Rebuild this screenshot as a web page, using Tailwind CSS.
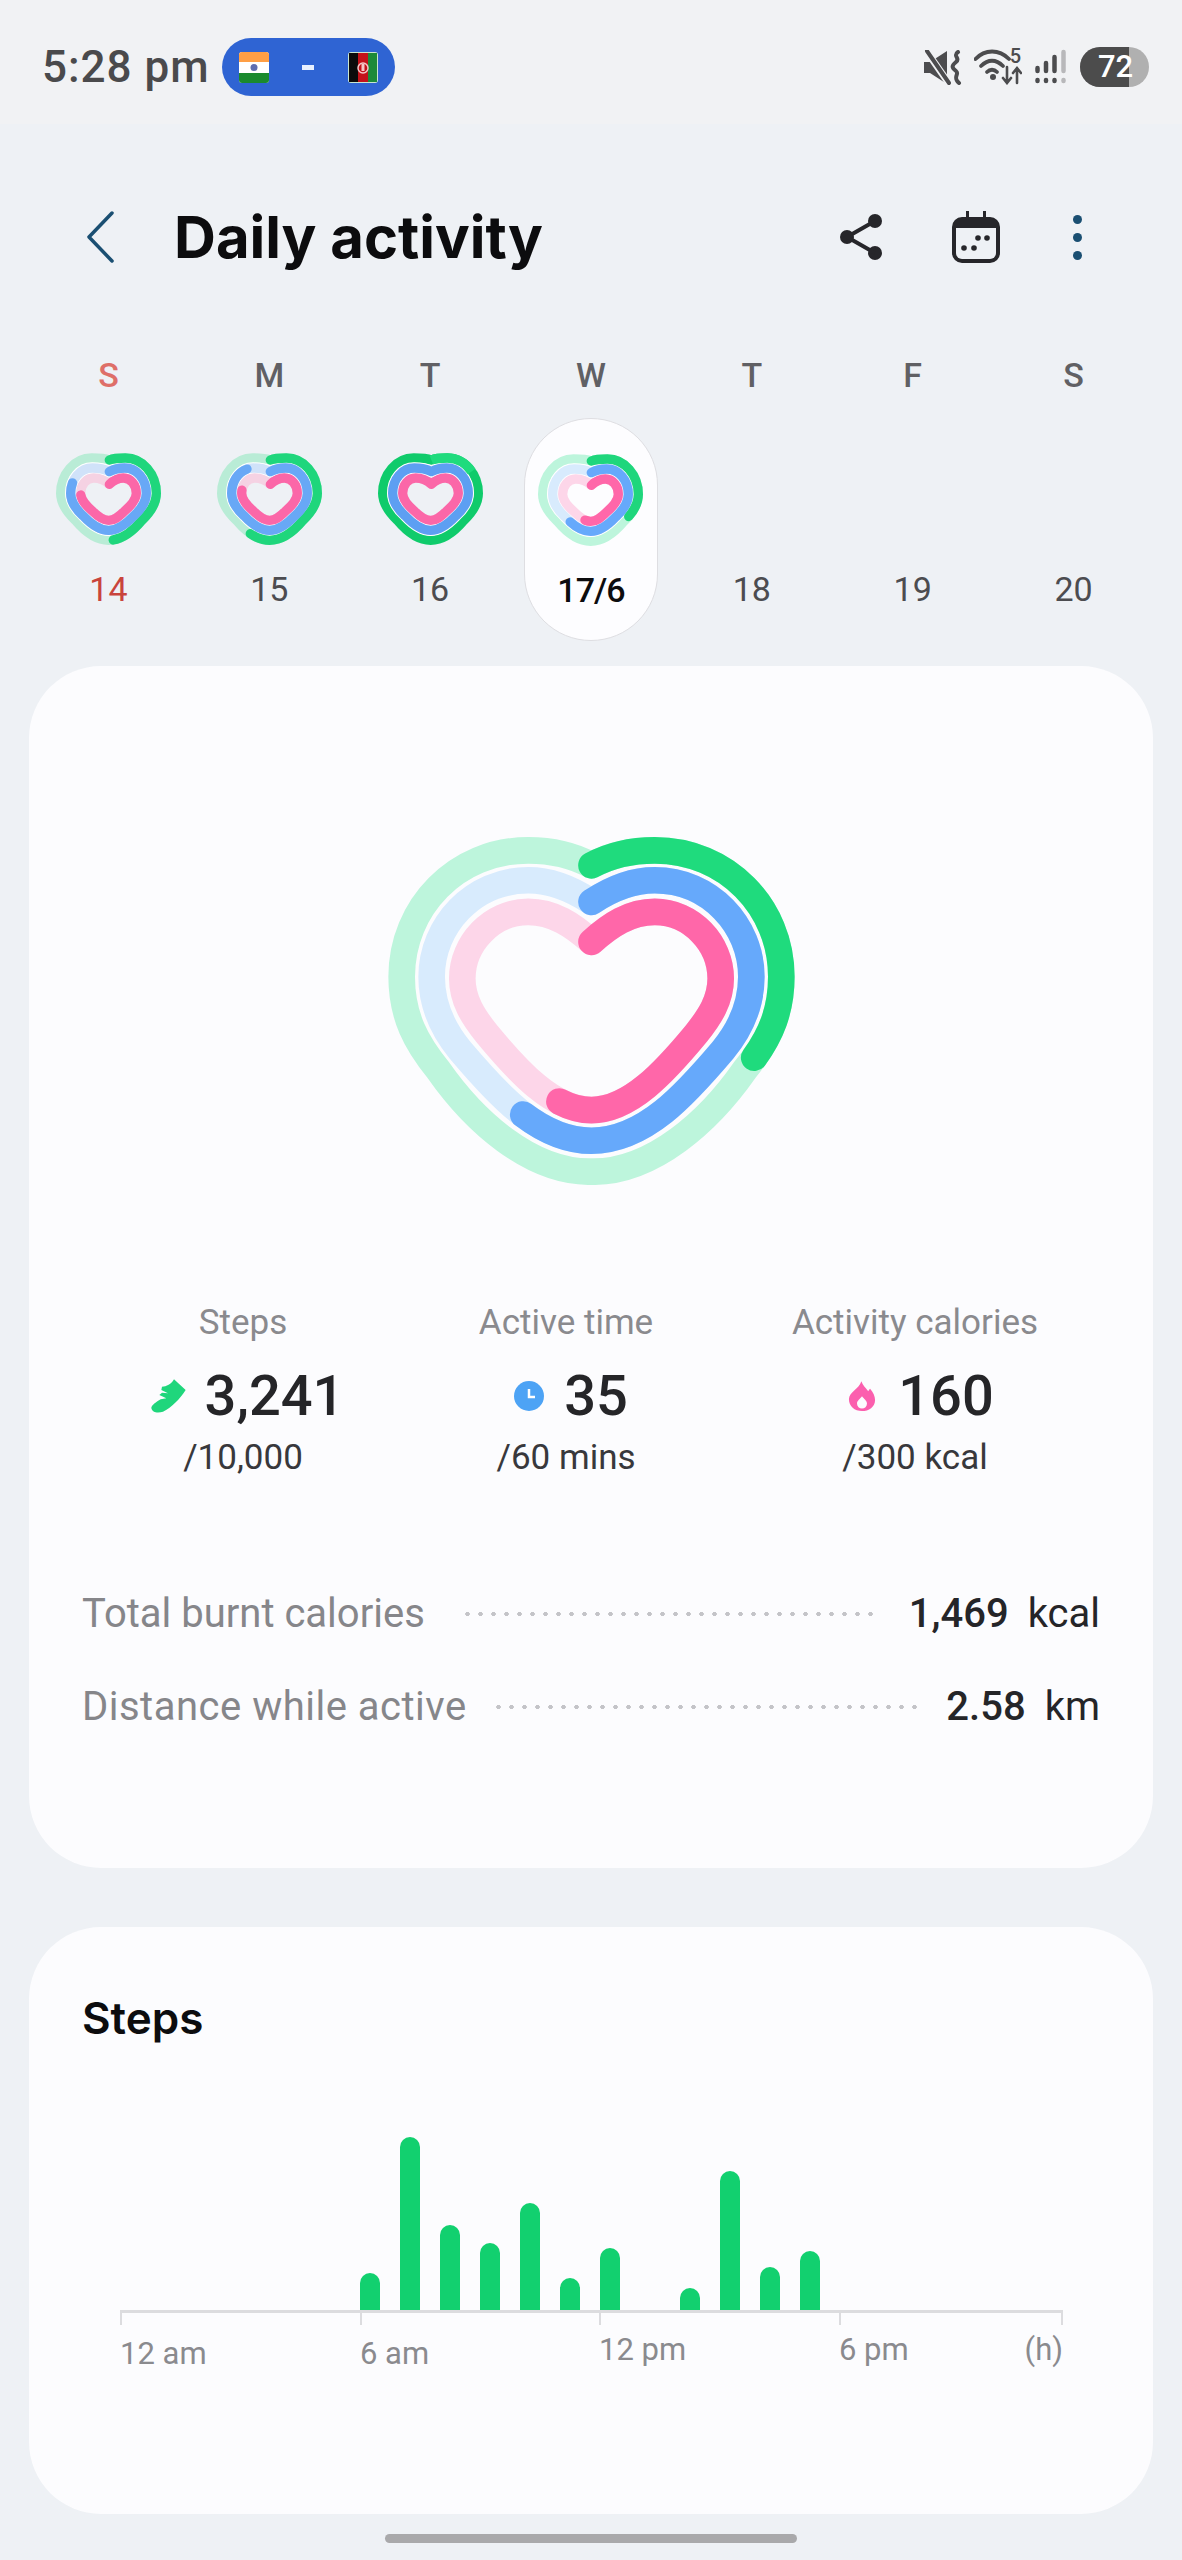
<!doctype html>
<html lang="en">
<head>
<meta charset="utf-8">
<title>Daily activity</title>
<script src="https://cdn.jsdelivr.net/npm/@tailwindcss/browser@4"></script>
</head>
<body class="bg-[#eef1f5] font-['Roboto',sans-serif] text-[#252528]">

<!-- shared heart rings, drawn clockwise from the notch -->
<svg class="hidden" width="0" height="0">
  <defs>
    <path id="ring-green" pathLength="100" d="M755 195 C810 165 880 150 945 150 C1160 150 1325 320 1325 530 C1325 650 1280 730 1215 810 C1110 960 940 1118 755 1115 C570 1118 400 960 295 810 C230 730 185 650 185 530 C185 320 350 150 565 150 C630 150 700 165 755 195"/>
    <path id="ring-blue" pathLength="100" d="M755 305 C815 265 880 240 945 240 C1110 240 1235 375 1235 530 C1235 625 1195 695 1150 750 C1040 880 915 1022 755 1022 C595 1022 470 880 360 750 C315 695 275 625 275 530 C275 375 400 240 565 240 C630 240 695 265 755 305"/>
    <path id="ring-pink" pathLength="100" d="M755 425 C810 375 870 335 945 335 C1055 335 1143 430 1143 535 C1143 600 1110 650 1070 700 C975 815 870 930 755 930 C640 930 535 815 440 700 C400 650 367 600 367 535 C367 430 455 335 565 335 C640 335 700 375 755 425"/>
    <!-- the week strip uses a chunkier version -->
    <path id="mini-green" pathLength="100" d="M190 45 C205 39 222 39 238 39 C290 39 331 88 331 145 C331 178 312 203 288 226 C258 262 226 286 188 286 C150 286 118 262 88 226 C64 203 44 178 44 145 C44 88 85 39 137 39 C155 39 174 39 190 45"/>
    <path id="mini-blue" pathLength="100" d="M190 80 C205 72 220 69 236 69 C273 69 301 103 301 145 C301 172 285 193 264 212 C238 240 215 256 188 256 C160 256 137 240 111 212 C90 193 74 172 74 145 C74 103 102 69 139 69 C155 69 175 72 190 80"/>
    <path id="mini-pink" pathLength="100" d="M190 118 C203 106 218 99 232 99 C254 99 271 120 271 145 C271 163 256 181 236 198 C218 216 205 226 188 226 C171 226 157 216 139 198 C119 181 104 163 104 145 C104 120 121 99 143 99 C158 99 177 106 190 118"/>
  </defs>
</svg>

<!-- status bar -->
<div class="h-[124px] bg-[#f1f2f4] pt-[10px] pl-[42px] pr-[33px] flex items-center">
  <span class="text-[44px] leading-none text-[#4a4a4c] font-medium tracking-[1px]">5:28 pm</span>
  <div class="ml-[12px] w-[173px] h-[58px] rounded-full bg-[#2f64d3] flex items-center pl-[17px]">
    <svg width="30" height="31" viewBox="0 0 30 31">
      <rect width="30" height="31" rx="3" fill="#fff"/>
      <path d="M0 10V3a3 3 0 0 1 3-3h24a3 3 0 0 1 3 3v7z" fill="#ff9f45"/>
      <path d="M0 21v7a3 3 0 0 0 3 3h24a3 3 0 0 0 3-3v-7z" fill="#1a8a2e"/>
      <circle cx="15" cy="15.500" r="3.500" fill="#5e6db0"/>
    </svg>
    <span class="ml-[33px] w-[12px] h-[5px] bg-[#e8f0ff]"></span>
    <svg class="ml-[34px]" width="30" height="31" viewBox="0 0 30 31">
      <rect width="30" height="31" rx="3" fill="#c9e6d0"/>
      <rect x="1" y="1" width="9" height="29" fill="#0b0b0b"/>
      <rect x="10" y="1" width="10" height="29" fill="#c4121a"/>
      <rect x="20" y="1" width="9" height="29" fill="#1c8a3a"/>
      <circle cx="15" cy="16" r="5" fill="none" stroke="#f3c9c9" stroke-width="1.500"/>
      <rect x="13.500" y="12" width="3" height="7" fill="#f3c9c9"/>
    </svg>
  </div>
  <div class="ml-auto flex items-center">
    <!-- mute + vibrate -->
    <svg width="38" height="35" viewBox="0 0 38 35" fill="none">
      <path d="M0 12h6L23 1v33L6 23H0z" fill="#4c4c4e"/>
      <path d="M1 -1L26 35" stroke="#f1f2f4" stroke-width="7"/>
      <path d="M3 1l22 32" stroke="#4c4c4e" stroke-width="4" stroke-linecap="round"/>
      <path d="M34 2c-6 4 3 6-2 10s-4 6 0 9-4 6 3 12" stroke="#4c4c4e" stroke-width="4" stroke-linecap="round"/>
    </svg>
    <!-- wifi -->
    <div class="ml-[12px] relative w-[48px] h-[36px]">
      <svg class="absolute left-0 top-0" width="48" height="36" viewBox="0 0 48 36" fill="none" stroke="#4c4c4e" stroke-linecap="round">
        <path d="M1.500 10C11 0 25 0 35 10" stroke-width="3.800"/>
        <path d="M7 17c7-7 15-7 22 0" stroke-width="3.800"/>
        <path d="M13 23c3-3 7-3 10 0" stroke-width="3.800"/>
        <circle cx="19" cy="28" r="3" fill="#4c4c4e" stroke="none"/>
        <path d="M33 18v15M29 29l4 5 4-5M43 34V19M39 24l4-5 4 5" stroke-width="2.600"/>
      </svg>
      <span class="absolute right-[1px] top-[-3px] text-[20px] leading-[20px] font-medium text-[#4c4c4e]">5</span>
    </div>
    <!-- signal -->
    <svg class="ml-[12px]" width="32" height="36" viewBox="0 0 32 36" fill="none" stroke-linecap="round" stroke-width="4.500" stroke="#4c4c4e">
      <path d="M3.500 19v3M3.500 31v1M12 14v8M12 31v1M20.500 8v14M20.500 31v1"/>
      <path d="M29.500 3v19M29.500 31v1" stroke="#b8b8ba"/>
    </svg>
    <!-- battery -->
    <div class="ml-[14px] relative w-[69px] h-[40px] rounded-full overflow-hidden bg-[#b0b0b0]">
      <div class="h-full w-[49px] bg-[#4c4c4c]"></div>
      <span class="absolute left-[18px] top-0 leading-[40px] text-[31px] font-medium text-white">72</span>
    </div>
  </div>
</div>

<!-- header -->
<div class="mt-[87px] h-[52px] pl-[87px] pr-[100px] flex items-center">
  <svg width="27" height="52" viewBox="0 0 27 52" fill="none">
    <path d="M25 2L2 26l23 24" stroke="#1a4f72" stroke-width="3.500" stroke-linecap="round" stroke-linejoin="round"/>
  </svg>
  <h1 class="ml-[60px] font-['Inter',sans-serif] text-[58px] leading-none font-bold text-[#0c0c0e]">Daily activity</h1>
  <div class="ml-auto flex items-center">
    <svg width="42" height="48" viewBox="0 0 42 48" fill="#26262a">
      <circle cx="35" cy="8" r="7"/>
      <circle cx="7" cy="24" r="7"/>
      <circle cx="35" cy="40" r="7"/>
      <path d="M35 8L7 24l28 16" fill="none" stroke="#26262a" stroke-width="4"/>
    </svg>
    <svg class="ml-[70px]" width="48" height="52" viewBox="0 0 48 52">
      <path d="M14 0h3v6h14V0h3v6h4a10 10 0 0 1 10 10v26a10 10 0 0 1-10 10H10A10 10 0 0 1 0 42V16A10 10 0 0 1 10 6h4z" fill="#26262a"/>
      <path d="M4 17h40v25a6 6 0 0 1-6 6H10a6 6 0 0 1-6-6z" fill="#eef1f5"/>
      <circle cx="12" cy="37" r="2.800" fill="#26262a"/>
      <circle cx="22" cy="37" r="2.800" fill="#26262a"/>
      <circle cx="26" cy="27" r="2.800" fill="#26262a"/>
      <circle cx="35" cy="27" r="2.800" fill="#26262a"/>
    </svg>
    <div class="ml-[73px] flex flex-col gap-[9px]">
      <span class="block w-[9px] h-[9px] rounded-full bg-[#1a4f72]"></span>
      <span class="block w-[9px] h-[9px] rounded-full bg-[#1a4f72]"></span>
      <span class="block w-[9px] h-[9px] rounded-full bg-[#1a4f72]"></span>
    </div>
  </div>
</div>

<!-- week strip -->
<div class="mt-[92px] px-[28px] grid grid-cols-7 text-center text-[34px] leading-[40px] text-[#606064] font-medium">
  <span class="text-[#de6f68]">S</span><span>M</span><span>T</span><span>W</span><span>T</span><span>F</span><span>S</span>
</div>
<div class="mt-[23px] px-[28px] grid grid-cols-7 text-center text-[34px] leading-[40px] text-[#4c4c50]">
  <div class="h-[223px] pt-[27px] flex flex-col items-center">
    <svg width="125" height="110" viewBox="0 0 375 330" fill="none" stroke-width="28" stroke-linecap="round">
      <use href="#mini-green" stroke="#b9ecd6"/><use href="#mini-blue" stroke="#fff" stroke-width="34"/><use href="#mini-blue" stroke="#d0e2f9"/><use href="#mini-pink" stroke="#f5d2e3"/>
      <use href="#mini-green" stroke="#1fd67c" stroke-dasharray="48 100"/><use href="#mini-blue" stroke="#68a8f6" stroke-dasharray="80 100"/><use href="#mini-pink" stroke="#fb67a8" stroke-dasharray="74 100"/>
    </svg>
    <span class="mt-[14px] text-[#c9443c]">14</span>
  </div>
  <div class="h-[223px] pt-[27px] flex flex-col items-center">
    <svg width="125" height="110" viewBox="0 0 375 330" fill="none" stroke-width="28" stroke-linecap="round">
      <use href="#mini-green" stroke="#b9ecd6"/><use href="#mini-blue" stroke="#fff" stroke-width="34"/><use href="#mini-blue" stroke="#d0e2f9"/><use href="#mini-pink" stroke="#f5d2e3"/>
      <use href="#mini-green" stroke="#1fd67c" stroke-dasharray="57 100"/><use href="#mini-blue" stroke="#68a8f6" stroke-dasharray="89 100"/><use href="#mini-pink" stroke="#fb67a8" stroke-dasharray="77 100"/>
    </svg>
    <span class="mt-[14px]">15</span>
  </div>
  <div class="h-[223px] pt-[27px] flex flex-col items-center">
    <svg width="125" height="110" viewBox="0 0 375 330" fill="none" stroke-width="28" stroke-linecap="round">
      <use href="#mini-green" stroke="#0fcb6b"/><use href="#mini-blue" stroke="#fff" stroke-width="34"/><use href="#mini-blue" stroke="#5d9ff2"/><use href="#mini-pink" stroke="#fb67a8"/>
      <use href="#mini-green" stroke="#1fdb7d" stroke-dasharray="16 100" stroke-linecap="butt"/>
    </svg>
    <span class="mt-[14px]">16</span>
  </div>
  <div class="h-[223px] pt-[27px] flex flex-col items-center justify-self-center w-[134px] rounded-full bg-[#fdfdff] border border-[#dedee2]">
    <svg class="shrink-0" width="125" height="110" viewBox="0 0 375 330" fill="none" stroke-width="28" stroke-linecap="round">
      <use href="#mini-green" stroke="#bdf5dc"/><use href="#mini-blue" stroke="#fff" stroke-width="34"/><use href="#mini-blue" stroke="#d8ebfd"/><use href="#mini-pink" stroke="#fdd6e9"/>
      <use href="#mini-green" stroke="#1fd67c" stroke-dasharray="33 100"/><use href="#mini-blue" stroke="#66a9fb" stroke-dasharray="60 100"/><use href="#mini-pink" stroke="#ff67a9" stroke-dasharray="53 100"/>
    </svg>
    <span class="mt-[14px] font-medium tracking-[-1px] text-[#0c0c0e]">17/6</span>
  </div>
  <div class="h-[223px] pt-[151px]">18</div>
  <div class="h-[223px] pt-[151px]">19</div>
  <div class="h-[223px] pt-[151px]">20</div>
</div>

<!-- summary card -->
<div class="mt-[25px] mx-[29px] h-[1202px] rounded-[72px] bg-[#fcfcfe] pt-[171px]">
  <svg class="mx-auto" width="407" height="348" viewBox="145 110 1220 1045" fill="none" stroke-width="80" stroke-linecap="round">
    <use href="#ring-green" stroke="#bdf5dc"/><use href="#ring-blue" stroke="#d8ebfd"/><use href="#ring-pink" stroke="#fdd6e9"/>
    <use href="#ring-green" stroke="#1fdb7d" stroke-dasharray="31.500 100"/><use href="#ring-blue" stroke="#66a9fb" stroke-dasharray="58 100"/><use href="#ring-pink" stroke="#ff67a9" stroke-dasharray="54.500 100"/>
  </svg>

  <div class="mt-[118px] pl-[64px] flex text-center">
    <div class="w-[300px]">
      <p class="text-[35px] leading-[40px] text-[#8a8a8e]">Steps</p>
      <div class="mt-[23px] h-[60px] pl-[9px] flex items-center justify-center gap-[18px]">
        <svg width="36" height="34" viewBox="39 39 108 102">
          <path d="M108 40L143 72C125 100 100 125 75 137C60 142 42 140 40 126C40 118 55 108 68 100L85 97L64 87L72 80L90 82L70 72L72 62C85 62 100 55 108 40Z" fill="#1fd67c"/>
        </svg>
        <span class="text-[56px] leading-none font-medium">3,241</span>
      </div>
      <p class="mt-[12px] text-[35px] leading-[40px] text-[#38383c]">/10,000</p>
    </div>
    <div class="w-[346px]">
      <p class="text-[35px] leading-[40px] text-[#8a8a8e]">Active time</p>
      <div class="mt-[23px] h-[60px] pl-[10px] flex items-center justify-center gap-[20px]">
        <svg width="30" height="30" viewBox="0 0 30 30">
          <circle cx="15" cy="15" r="15" fill="#4da3f5"/>
          <path d="M15 8v8h6" fill="none" stroke="#fff" stroke-width="2.500"/>
        </svg>
        <span class="text-[56px] leading-none font-medium">35</span>
      </div>
      <p class="mt-[12px] text-[35px] leading-[40px] text-[#38383c]">/60 mins</p>
    </div>
    <div class="w-[352px]">
      <p class="text-[35px] leading-[40px] text-[#8a8a8e]">Activity calories</p>
      <div class="mt-[23px] h-[60px] pl-[12px] flex items-center justify-center gap-[22px]">
        <svg width="28" height="34" viewBox="25 35 90 105">
          <path fill-rule="evenodd" d="M68 40C72 52 82 62 90 72C92 68 94 66 96 64C106 76 112 88 112 100C112 122 92 136 70 136C46 136 28 120 28 98C28 74 60 66 68 40ZM70 88C64 96 54 102 54 112A16 16 0 0 0 86 112C86 102 76 96 70 88Z" fill="#fb5fae"/>
        </svg>
        <span class="text-[56px] leading-none font-medium">160</span>
      </div>
      <p class="mt-[12px] text-[35px] leading-[40px] text-[#38383c]">/300 kcal</p>
    </div>
  </div>

  <div class="mt-[114px] px-[53px] flex items-center h-[44px] text-[40px] leading-[44px]">
    <span class="text-[#86868a]">Total burnt calories</span>
    <span class="flex-1 ml-[36px] mr-[36px] h-[6px] bg-[radial-gradient(circle,#c4c4c8_2px,transparent_2.5px)] bg-[length:13px_6px]"></span>
    <span class="font-medium">1,469</span><span class="ml-[19px]">kcal</span>
  </div>
  <div class="mt-[49px] px-[53px] flex items-center h-[44px] text-[40px] leading-[44px]">
    <span class="text-[#86868a] tracking-[0.5px]">Distance while active</span>
    <span class="flex-1 ml-[25px] mr-[28px] h-[6px] bg-[radial-gradient(circle,#c4c4c8_2px,transparent_2.5px)] bg-[length:13px_6px]"></span>
    <span class="font-medium">2.58</span><span class="ml-[19px]">km</span>
  </div>
</div>

<!-- steps card -->
<div class="mt-[59px] mx-[29px] h-[587px] rounded-[72px] bg-[#fcfcfe] px-[53px] pt-[66px]">
  <h2 class="font-['Inter',sans-serif] text-[44px] leading-[50px] font-semibold text-[#0c0c0e]">Steps</h2>
  <div class="mt-[92px] ml-[38px] w-[943px]">
    <div class="h-[175px] pl-[240px] flex items-end gap-[20px]">
      <span class="w-[20px] h-[37px] rounded-t-full bg-[#12d06f]"></span>
      <span class="w-[20px] h-[173px] rounded-t-full bg-[#12d06f]"></span>
      <span class="w-[20px] h-[85px] rounded-t-full bg-[#12d06f]"></span>
      <span class="w-[20px] h-[67px] rounded-t-full bg-[#12d06f]"></span>
      <span class="w-[20px] h-[107px] rounded-t-full bg-[#12d06f]"></span>
      <span class="w-[20px] h-[32px] rounded-t-full bg-[#12d06f]"></span>
      <span class="w-[20px] h-[62px] rounded-t-full bg-[#12d06f]"></span>
      <span class="w-[20px]"></span>
      <span class="w-[20px] h-[22px] rounded-t-full bg-[#12d06f]"></span>
      <span class="w-[20px] h-[139px] rounded-t-full bg-[#12d06f]"></span>
      <span class="w-[20px] h-[43px] rounded-t-full bg-[#12d06f]"></span>
      <span class="w-[20px] h-[59px] rounded-t-full bg-[#12d06f]"></span>
    </div>
    <div class="flex border-t-[3px] border-[#dcdcdf] text-[31px] leading-[36px] text-[#8a8a8e]">
      <div class="w-[240px]"><div class="w-[2px] h-[12px] bg-[#dcdcdf]"></div><p class="mt-[11px]">12 am</p></div>
      <div class="w-[239px]"><div class="w-[2px] h-[12px] bg-[#dcdcdf]"></div><p class="mt-[11px]">6 am</p></div>
      <div class="w-[240px]"><div class="w-[2px] h-[12px] bg-[#dcdcdf]"></div><p class="mt-[7px]">12 pm</p></div>
      <div class="w-[224px]">
        <div class="flex justify-between"><div class="w-[2px] h-[12px] bg-[#dcdcdf]"></div><div class="w-[2px] h-[12px] bg-[#dcdcdf]"></div></div>
        <div class="mt-[7px] flex justify-between"><span>6 pm</span><span>(h)</span></div>
      </div>
    </div>
  </div>
</div>

<div class="mt-[20px] mx-auto w-[412px] h-[9px] rounded-full bg-[#a9a9ab]"></div>
</body>
</html>
